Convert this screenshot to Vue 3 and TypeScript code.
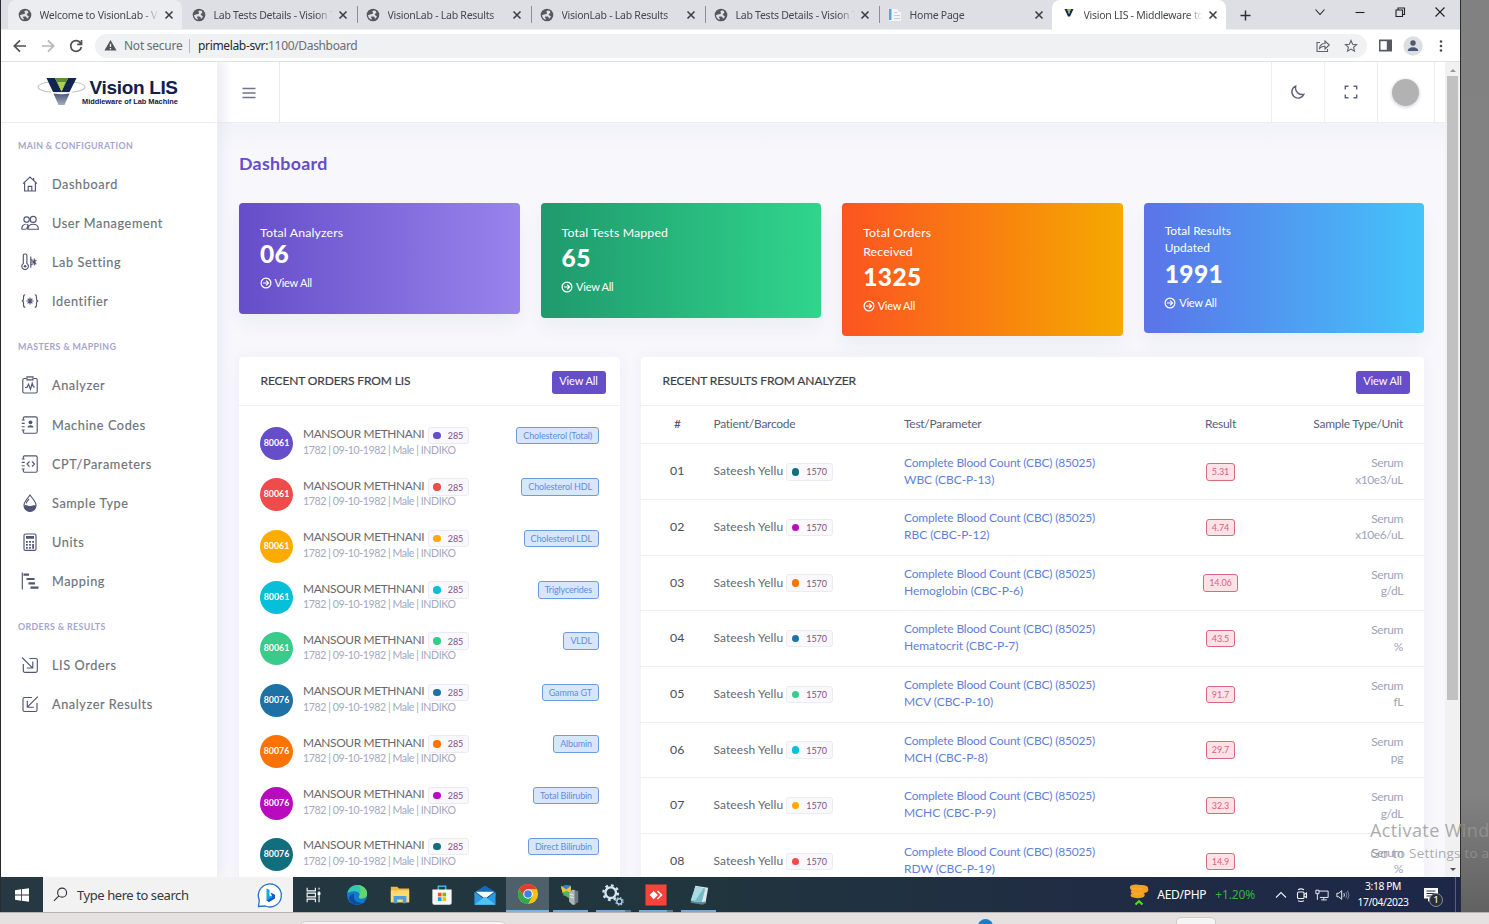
<script setup lang="ts">
interface Tab { title: string; icon: 'globe' | 'page' | 'vision'; state?: string }
interface NavItem { label: string; icon: string }
interface NavGroup { title: string; items: NavItem[] }

const tabs: Tab[] = [
  { title: 'Welcome to VisionLab - V', icon: 'globe', state: 'hover' },
  { title: 'Lab Tests Details - Vision T', icon: 'globe' },
  { title: 'VisionLab - Lab Results', icon: 'globe' },
  { title: 'VisionLab - Lab Results', icon: 'globe' },
  { title: 'Lab Tests Details - Vision T', icon: 'globe' },
  { title: 'Home Page', icon: 'page', state: 'last' },
  { title: 'Vision LIS - Middleware to', icon: 'vision', state: 'active' },
]

const solid = 'fill="currentColor" stroke="none"'
const icons: Record<string, string> = {
  home: '<path d="M2 8.6 9 2l7 6.6M3.6 7.4V16h10.8V7.4M7.2 16v-4.6h3.6V16M12.6 3v2"/>',
  users: '<circle cx="5.6" cy="5.6" r="2.7"/><circle cx="12.2" cy="5.4" r="3"/><path d="M.7 15.2c0-3 1.7-5 4-5M.7 15.2h4.4M7 15.2c0-3.2 2-5 5.2-5s5.200 1.800 5.200 5zM5.600 10.200l1.500 1-1.500 4"/>',
  lab: `<path d="M2.300 10.500V2.300c0-1.800 3.600-1.800 3.600 0v8.200a3.300 3.300 0 1 1-3.600 0z"/><circle cx="4.100" cy="13.300" r="1.300" ${solid}/><path d="M9.800 3.500v11.200M9.800 6.200l2 1.200M9.800 12l2-1.200M9.800 9h4.700M13.300 5.500v2L11.800 9l1.500 1.500v2M15.300 6.800 13.500 9l1.800 2.300"/>`,
  identifier: '<path d="M4.200 2.700C2.500 2.700 2.500 3.500 2.500 5v2c0 1-.6 2-1.800 2 1.200 0 1.800 1 1.800 2v2c0 1.500 0 2.300 1.700 2.300M13.800 2.700c1.700 0 1.700.8 1.700 2.300v2c0 1 .6 2 1.800 2-1.200 0-1.800 1-1.800 2v2c0 1.500 0 2.300-1.700 2.300"/><path stroke-width="1.200" d="M9 5.400v7.200M5.400 9h7.200M6.600 6.600l4.800 4.800M11.400 6.600l-4.800 4.800"/>',
  analyzer: '<path d="M5.500 2.500H3.300c-1 0-1.500.5-1.500 1.500v11.500c0 1 .5 1.500 1.500 1.500h11.400c1 0 1.500-.5 1.500-1.500V4c0-1-.5-1.500-1.500-1.500h-2.200"/><path d="M6 .8h6v3H6zM4 11.500h2l1.500-3.300 2 5.300 1.700-6.300L12.500 11H14"/>',
  codes: `<path d="M2.300 4V2c0-.7.4-1.200 1.200-1.200h11.200c1 0 1.500.5 1.500 1.500v13.400c0 1-.5 1.500-1.500 1.500H3.500c-.8 0-1.200-.5-1.200-1.200v-1.500M.7 4h3M.7 7.300h3M.7 10.700h3M.7 14h3"/><circle cx="9.500" cy="6.300" r="1.900" ${solid}/><path d="M6.500 11.500c.4-3 5.600-3 6 0z" ${solid}/>`,
  params: '<path d="M2.300 4V2c0-.7.4-1.200 1.200-1.200h11.200c1 0 1.500.5 1.500 1.500v13.400c0 1-.5 1.500-1.500 1.500H3.500c-.8 0-1.200-.5-1.200-1.200v-1.500M.7 4h3M.7 7.300h3M.7 10.700h3M.7 14h3M8.500 6.500 6 9l2.500 2.500M11 6.500 13.500 9 11 11.500"/>',
  drop: `<path d="M9 1c2.500 3.700 6 6.500 6 10.300a6 6 0 0 1-12 0C3 7.500 6.500 4.700 9 1z"/><path d="M3 11.500c2.500-1.800 4 1 6.500.5s3.500-1 5.500-.5a6 6 0 0 1-12 0z" ${solid}/><path d="M8 5C6.500 6.500 5.600 8 5.400 9.300"/>`,
  calc: `<rect x="3" y="1" width="12" height="16.400" rx="1.500"/><path d="M5 3h8v2.800H5zM5 8h1.800v1.800H5zM8.100 8h1.800v1.800H8.100zM11.200 8H13v1.800h-1.800zM5 11h1.800v1.800H5zM8.100 11h1.800v1.800H8.100zM11.200 11H13v4.800h-1.800zM5 14h1.800v1.800H5zM8.100 14h1.800v1.800H8.100z" ${solid}/>`,
  mapping: '<path d="M1.300.5v17"/><path stroke-width="2.200" d="M2.500 2.700H8M5.500 7h8M7.500 11.300H14M9.500 15.600h8"/>',
  inbox: '<path d="M2.300 8v6.800c0 1 .5 1.500 1.500 1.500h11c1 0 1.500-.5 1.500-1.500V4c0-1-.5-1.500-1.500-1.500H8.500M1 1.500l10.500 10.300M5.800 12h6V5.500"/>',
  edit: '<path d="M11 2.500H3.500c-1 0-1.500.5-1.500 1.500v11c0 1 .5 1.500 1.500 1.500h11c1 0 1.500-.5 1.500-1.500V8M16.800 1.700 6.300 12.200M6.300 5.800v6.400h6.500"/>',
}

const nav: NavGroup[] = [
  { title: 'MAIN & CONFIGURATION', items: [
    { label: 'Dashboard', icon: 'home' },
    { label: 'User Management', icon: 'users' },
    { label: 'Lab Setting', icon: 'lab' },
    { label: 'Identifier', icon: 'identifier' },
  ] },
  { title: 'MASTERS & MAPPING', items: [
    { label: 'Analyzer', icon: 'analyzer' },
    { label: 'Machine Codes', icon: 'codes' },
    { label: 'CPT/Parameters', icon: 'params' },
    { label: 'Sample Type', icon: 'drop' },
    { label: 'Units', icon: 'calc' },
    { label: 'Mapping', icon: 'mapping' },
  ] },
  { title: 'ORDERS & RESULTS', items: [
    { label: 'LIS Orders', icon: 'inbox' },
    { label: 'Analyzer Results', icon: 'edit' },
  ] },
]

const stats = [
  { lines: ['Total Analyzers'], value: '06', cls: 'violet' },
  { lines: ['Total Tests Mapped'], value: '65', cls: 'green' },
  { lines: ['Total Orders', 'Received'], value: '1325', cls: 'orange' },
  { lines: ['Total Results', 'Updated'], value: '1991', cls: 'blue' },
]

const orders = [
  { code: '80061', test: 'Cholesterol (Total)', color: '#664dc9' },
  { code: '80061', test: 'Cholesterol HDL', color: '#ef4b4b' },
  { code: '80061', test: 'Cholesterol LDL', color: '#ffab00' },
  { code: '80061', test: 'Triglycerides', color: '#06c0d9' },
  { code: '80061', test: 'VLDL', color: '#38cb89' },
  { code: '80076', test: 'Gamma GT', color: '#1d71a5' },
  { code: '80076', test: 'Albumin', color: '#fc7303' },
  { code: '80076', test: 'Total Bilirubin', color: '#b90abf' },
  { code: '80076', test: 'Direct Bilirubin', color: '#116e7c' },
]

const results = [
  { test: 'WBC (CBC-P-13)', value: '5.31', unit: 'x10e3/uL', color: '#116e7c' },
  { test: 'RBC (CBC-P-12)', value: '4.74', unit: 'x10e6/uL', color: '#b90abf' },
  { test: 'Hemoglobin (CBC-P-6)', value: '14.06', unit: 'g/dL', color: '#fc7303' },
  { test: 'Hematocrit (CBC-P-7)', value: '43.5', unit: '%', color: '#1d71a5' },
  { test: 'MCV (CBC-P-10)', value: '91.7', unit: 'fL', color: '#38cb89' },
  { test: 'MCH (CBC-P-8)', value: '29.7', unit: 'pg', color: '#06c0d9' },
  { test: 'MCHC (CBC-P-9)', value: '32.3', unit: 'g/dL', color: '#ffab00' },
  { test: 'RDW (CBC-P-19)', value: '14.9', unit: '%', color: '#ef4b4b' },
]

const apps: { name: string; art: string; state?: string }[] = [
  { name: 'tasks', art: '<g fill="none" stroke="#fff" stroke-width="1.200"><path d="M4.500 4v3.500h9V4M4.500 20v-3.500h9V20M4.500 10h9v4h-9zM17.500 4v2M17.500 8v12"/></g><path fill="#fff" d="M16 9h3v3h-3z"/>' },
  { name: 'edge', art: '<circle cx="12" cy="12" r="11" fill="#1279cf"/><path d="M1.500 10C3 3 9 .500 14 1.200c5 1 9.500 5 9 10.500-.4 3-4 4.300-7 4-2-.2-2.500-1-1.600-2.200C16 11 13.500 7.800 9.500 7.800 6 7.800 3.500 9 1.500 10z" fill="#35c8b0"/><path d="M14 1.200c5 1 9.500 5 9 10.500-.4 3-4 4.300-7 4-2-.2-2.500-1-1.600-2.200C16 11 17 5 14 1.200z" fill="#63d66b"/><path d="M9 11c-2 5 2 10.500 9 9.500-4 3.500-13 2.500-14.500-4C3 13 5.500 10.500 9 11z" fill="#0d4da1"/>' },
  { name: 'files', art: '<path fill="#f4b63c" d="M2 3h7l2 2h11v15H2z"/><path fill="#ffd971" d="M2 7h20v13H2z"/><path fill="#4a9ee0" d="M5 13h14v8h-4v-4H9v4H5z"/>' },
  { name: 'store', art: '<path fill="none" stroke="#3bb3ea" stroke-width="1.800" d="M8 7V2.500h8V7"/><path fill="#f7f7f7" d="M1.500 6h21v14.500q0 2-2 2h-17q-2 0-2-2z"/><path fill="#f25022" d="M7.500 9.500h4v4h-4z"/><path fill="#7fba00" d="M12.500 9.500h4v4h-4z"/><path fill="#00a4ef" d="M7.500 14.500h4v4h-4z"/><path fill="#ffb900" d="M12.500 14.500h4v4h-4z"/>' },
  { name: 'mail', art: '<path fill="#1668b8" d="M.5 9 12 1.500 23.500 9v4H.5z"/><path fill="#2a9be3" d="M.5 9v13.500h23V9L12 17z"/><path fill="#f4fafd" d="M2 8.500h20L12 16z"/><path fill="#4fc3f3" d="m.5 22.500 11.500-9 11.500 9z"/>' },
  { name: 'chrome', state: 'current', art: '<circle cx="12" cy="12" r="11" fill="#fbc116"/><path fill="#e33b2e" d="M2.500 6.500A11 11 0 0 1 21.500 6.500H12L7.400 14.600z"/><path fill="#2da94f" d="M2.500 6.500A11 11 0 0 0 12 23l4.600-8.400H7.400z"/><circle cx="12" cy="12" r="5.200" fill="#fff"/><circle cx="12" cy="12" r="4.100" fill="#3f7fe8"/>' },
  { name: 'server', state: 'open', art: '<path fill="#3683d2" d="M2 3q5-3 11-1v10l-8 1z"/><path fill="#f2c230" d="m2 2 6 4 5-4v8l-5-2-4 2z"/><path fill="#5bb44b" d="m4 9 6-1 2 8-5-3z"/><path fill="#aeb6ba" d="m11 9 4-3 3 1v15l-3 1-4-4z"/><path fill="#6a7880" d="m17 8 4-1v13l-4 2z"/><path stroke="#eef2f3" d="m12 11 4 1m-4 2 4 1"/>' },
  { name: 'services', state: 'open stacked', art: '<circle cx="9.500" cy="9.500" r="5.800" fill="none" stroke="#d6e6ee" stroke-width="2.600"/><circle cx="9.500" cy="9.500" r="8" fill="none" stroke="#d6e6ee" stroke-width="2.500" stroke-dasharray="3 3.280"/><circle cx="19" cy="19" r="2.800" fill="none" stroke="#a9cadb" stroke-width="1.600"/><circle cx="19" cy="19" r="4" fill="none" stroke="#a9cadb" stroke-width="1.500" stroke-dasharray="1.600 1.550"/>' },
  { name: 'anydesk', state: 'open stacked', art: '<path fill="#f9423a" d="M.5.5h23v23H.5z"/><path fill="#fff" d="m9.500 7.500 4.500 4.500-4.500 4.500L5 12zM13 8.200l1.200-1.200 5 5-5 5-1.200-1.200 3.800-3.800z"/>' },
  { name: 'notes', state: 'open', art: '<path fill="#dfe9ea" d="m8 2 14 2-3 17-15-2z"/><path fill="#77b9c6" d="m8 3 11 2-4 15-12-2z"/><path fill="#a8dce2" d="m8 3 9 1.700L8 18H3z"/><path fill="#5a8793" d="M3 18.500 15 20l4-1v2l-3 1.500L3 20.500z"/>' },
]
</script>

<template>
  <div class="screen">
    <div class="window">
      <div class="tabstrip">
        <div v-for="(t, i) in tabs" :key="i" class="tab" :class="t.state">
          <svg v-if="t.icon === 'globe'" class="fav" viewBox="0 0 14 14"><circle cx="7" cy="7" r="6.300" fill="#55595e" /><path fill="#dfe1e5" d="M8 2.500c-1.500.3-2 1-1.200 2C7.800 5.500 6 6.300 5 6.200 3.800 6.100 2.800 7 2 7c.2 2.500 1.500 4 3.500 4.700.6-1.200 0-1.700-.7-2.500C4.400 8.500 6.500 8.200 7.500 8.500c1.300.5 1.500 1.300 1.400 2.500L10.800 9c.2-1-.5-1.500-1.800-1.800C8.500 6 9 5.500 10.300 5L10 3.300C9.500 2.800 8.700 2.400 8 2.500z" /></svg>
          <svg v-else-if="t.icon === 'page'" class="fav" viewBox="0 0 14 14"><path fill="#f4f4f4" d="M1 1h8l2 3h2v9H1z" /><path fill="#58a6d6" d="M1 1h2.500v11H1z" /><path stroke="#c8ccd0" d="M6 4.500h3M6 7.500h6M6 10.500h6" /></svg>
          <svg v-else class="fav" viewBox="0 0 14 14"><path fill="#17294f" d="M2.500 1h2.700L7 6l1.800-5h2.700L8 8.500H6z" /><path fill="#8cba62" d="M5 1h4L7 6z" /></svg>
          <span class="tab-title">{{ t.title }}</span>
          <svg class="close" viewBox="0 0 10 10"><path d="m1.500 1.500 7 7m0-7-7 7" /></svg>
        </div>
        <svg class="plus" viewBox="0 0 12 12"><path d="M6 .5v11M.5 6h11" /></svg>
        <div class="win-controls">
          <svg viewBox="0 0 12 12"><path d="m1.500 3.500 4.500 5 4.500-5" /></svg>
          <svg viewBox="0 0 12 12"><path d="M1.500 6.500h9" /></svg>
          <svg viewBox="0 0 12 12"><path d="M2 4h6.500v6.500H2zM4 4V2h6.500v6.500h-2" /></svg>
          <svg viewBox="0 0 12 12"><path d="m1.500 1.500 9 9m0-9-9 9" /></svg>
        </div>
      </div>

      <div class="toolbar">
        <svg class="nav-btn" viewBox="0 0 14 14"><path d="M13 7H1.500M7 1.300 1.300 7 7 12.700" /></svg>
        <svg class="nav-btn faded" viewBox="0 0 14 14"><path d="M1 7h11.500M7 1.300 12.700 7 7 12.700" /></svg>
        <svg class="nav-btn" viewBox="0 0 14 14"><path d="M11.800 4.300a5.400 5.400 0 1 0 .6 3.700M12.500 1v4.300H8.200" /></svg>
        <div class="omnibox">
          <svg class="warn" viewBox="0 0 14 14"><path fill="#505459" d="M7 1 13.500 12.500H.5z" /><path stroke="#f0f1f3" stroke-width="1.400" d="M7 5v3.700M7 9.700v1.500" /></svg>
          <span class="not-secure">Not secure</span>
          <span class="url"><b>primelab-svr:</b>1100/Dashboard</span>
          <svg class="share" viewBox="0 0 14 14"><path d="M4 3.500H1v9h10.500V10M3.500 9.500c.3-3.500 2.500-5 5.500-5V2l4.300 4L9 10V7.300c-2.500 0-4 .5-5.500 2.200z" /></svg>
          <svg class="star" viewBox="0 0 14 14"><path d="m7 1.500 1.600 3.700 4 .4-3 2.700.9 3.900L7 10.100l-3.500 2.100.9-3.900-3-2.700 4-.4z" /></svg>
        </div>
        <svg class="panel-btn" viewBox="0 0 13 13"><path fill="#55595f" d="M0 .5h13v12H0z" /><path fill="#fff" d="M1.500 2.200h6.300v8.600H1.500z" /></svg>
        <svg class="profile" viewBox="0 0 20 20"><circle cx="10" cy="10" r="9.700" fill="#dcdee4" /><circle cx="10" cy="7" r="2.700" fill="#4c5871" /><path fill="#4c5871" d="M4.800 15c0-5 10.400-5 10.400 0z" /></svg>
        <svg class="dots" viewBox="0 0 4 14"><circle cx="2" cy="2.500" r="1.300" /><circle cx="2" cy="7" r="1.300" /><circle cx="2" cy="11.500" r="1.300" /></svg>
      </div>

      <div class="page">
        <aside class="sidebar">
          <div class="brand">
            <svg class="mark" viewBox="0 0 49 30">
              <defs><linearGradient id="vtip" x1="0" y1="0" x2="0" y2="1"><stop offset="0" stop-color="#4c5879" /><stop offset="1" stop-color="#a7aec0" /></linearGradient></defs>
              <ellipse cx="24.500" cy="12" rx="23.500" ry="6" fill="none" stroke="#c3c4c8" stroke-width="1.200" />
              <path fill="#122450" d="M9.500 3H18l6.500 13.500L31 3h8.500l-7 14H16z" />
              <path fill="#5f8f35" d="M18 3h13l-6.500 13.500z" /><path fill="#b0cf4b" d="m20.500 7h8l-4 9.500z" />
              <path fill="#fff" d="M14 16.500q10.500 2.500 21 0v1.300q-10.500 2.500-21 0z" />
              <path fill="url(#vtip)" d="M16.500 18.600q8 1.200 16 0L27.500 30h-6z" />
            </svg>
            <div class="brand-text"><span class="brand-name">Vision LIS</span><span class="brand-sub">Middleware of Lab Machine</span></div>
          </div>
          <nav>
            <section v-for="g in nav" :key="g.title" class="group">
              <h6>{{ g.title }}</h6>
              <a v-for="n in g.items" :key="n.label" class="nav-item">
                <svg viewBox="0 0 18 18" v-html="icons[n.icon]"></svg><span>{{ n.label }}</span>
              </a>
            </section>
          </nav>
        </aside>

        <div class="main">
          <header class="topbar">
            <div class="burger"><svg viewBox="0 0 14 12"><path d="M.5 1.500h13M.5 6h13M.5 10.500h13" /></svg></div>
            <div class="spacer"></div>
            <div class="top-cell"><svg viewBox="0 0 16 16"><path d="M5.700 2.200a6.200 6.200 0 1 0 8.100 8.100C9.700 11.500 4.500 8 5.700 2.200z" /></svg></div>
            <div class="top-cell"><svg viewBox="0 0 16 16"><path d="M2.300 5.500V2.300h3.200M10.500 2.300h3.200v3.200M13.700 10.500v3.200h-3.200M5.500 13.700H2.300v-3.200" /></svg></div>
            <div class="top-cell user"><span class="avatar"></span></div>
          </header>

          <div class="content">
            <h1>Dashboard</h1>
            <div class="stats">
              <div v-for="s in stats" :key="s.cls" class="stat" :class="s.cls">
                <div v-for="l in s.lines" :key="l" class="stat-label">{{ l }}</div>
                <div class="stat-value">{{ s.value }}</div>
                <div class="stat-link"><svg viewBox="0 0 12 12"><circle cx="6" cy="6" r="4.900" /><path d="M3 6h5.500M6.200 3.700 8.500 6 6.200 8.300" /></svg>View All</div>
              </div>
            </div>

            <div class="panels">
              <section class="panel orders">
                <div class="panel-head"><h2>RECENT ORDERS FROM LIS</h2><button>View All</button></div>
                <div class="order-list">
                  <div v-for="o in orders" :key="o.test" class="order">
                    <span class="code" :style="{ background: o.color }">{{ o.code }}</span>
                    <div class="order-info">
                      <div class="order-top"><span class="name">MANSOUR METHNANI</span><span class="chip"><i :style="{ background: o.color }"></i>285</span></div>
                      <div class="order-sub">1782 | 09-10-1982 | Male | INDIKO</div>
                    </div>
                    <span class="tag">{{ o.test }}</span>
                  </div>
                </div>
              </section>

              <section class="panel results">
                <div class="panel-head"><h2>RECENT RESULTS FROM ANALYZER</h2><button>View All</button></div>
                <div class="row thead"><span class="num">#</span><span>Patient/Barcode</span><span>Test/Parameter</span><span class="mid">Result</span><span class="end">Sample Type/Unit</span></div>
                <div v-for="(r, i) in results" :key="r.test" class="row">
                  <span class="num">0{{ i + 1 }}</span>
                  <span class="patient">Sateesh Yellu<span class="chip"><i :style="{ background: r.color }"></i>1570</span></span>
                  <span class="test"><span class="panel-name">Complete Blood Count (CBC) (85025)</span><span>{{ r.test }}</span></span>
                  <span class="mid"><span class="value">{{ r.value }}</span></span>
                  <span class="end unit"><span>Serum</span><span>{{ r.unit }}</span></span>
                </div>
              </section>
            </div>
          </div>
        </div>

        <div class="scrollbar"><i class="up"></i><div class="thumb"></div><i class="down"></i></div>
      </div>

      <div class="taskbar">
        <div class="start"><svg viewBox="0 0 16 16"><path fill="#fff" d="M1 3.200 7 2.300v5.300H1zM7.800 2.200 15 1.200v6.400H7.800zM1 8.400h6v5.300l-6-.9zM7.800 8.400H15v6.400l-7.200-1z" /></svg></div>
        <div class="search">
          <svg class="lens" viewBox="0 0 16 16"><circle cx="9.700" cy="6" r="4.800" /><path d="M6.300 9.400 1 14.800" /></svg>
          <span>Type here to search</span>
          <svg class="bing" viewBox="0 0 26 26"><path fill="#fff" stroke="#246fd1" stroke-width="1.300" d="M1.500 24.500l.8-6.500a11.500 11.500 0 1 1 6 6z" /><path fill="#19a6e8" d="m9.500 6.500 3 1.200V14l5.500-.5v3L12 20l-2.500-1.700z" /><path fill="#1757c8" d="m13.500 10.500 4.500 2.300v3.500L12 20l-2.500-1.700 6-3.300z" /></svg>
        </div>
        <div v-for="a in apps" :key="a.name" class="app" :class="a.state"><svg viewBox="0 0 24 24" v-html="a.art"></svg></div>
        <div class="spacer"></div>
        <svg class="coins" viewBox="0 0 20 22"><path fill="#f6a020" d="M2 1.500Q6 0 11 1q7-.5 8 2.500 1.500 5-4 5.500 2 3-1.500 4.500-6 1.500-11-.5-2-2 .5-4Q.5 8.500 2.500 6.500-.5 3 2 1.500z" /><path fill="none" stroke="#ffb23c" d="M3 4.500q6 1.500 10 0M5 9.500q5 1 8-.5" /><path fill="none" stroke="#5fd31c" stroke-width="2.200" d="m6.500 20.500 3.500-3.300 3.500 3.300" /></svg>
        <span class="pair">AED/PHP</span><span class="gain">+1.20%</span>
        <svg class="tray" viewBox="0 0 14 14"><path d="m2 9.500 5-5 5 5" /></svg>
        <svg class="tray" viewBox="0 0 14 14"><rect x="2.500" y="4" width="6.500" height="6.500" rx="1" /><path d="m9 6.500 2.500-1.500v4.500L9 8M3 1.700Q6 0 9 1.700M3 12.700q3 1.500 6 0" /></svg>
        <svg class="tray" viewBox="0 0 16 14"><path d="M4.500 2.500H15v7.300H5.500M10 10v2.500M7 12.600h6.500M1 1.500h3.500v4H1zM2.700 5.500v7" /></svg>
        <svg class="tray" viewBox="0 0 16 14"><path d="M1 5h2.200L6.500 2v10L3.200 9H1zM9 5q1.200 2 0 4" /><path class="dim" d="M11.200 3.500q2.400 3.500 0 7M13.200 2q3.400 5 0 10" /></svg>
        <div class="clock"><span>3:18 PM</span><span>17/04/2023</span></div>
        <div class="notif"><svg viewBox="0 0 16 16"><path fill="#fff" d="M1 1h14v10.500H8L5 15v-3.500H1z" /><path stroke="#25304d" d="M3.500 4h9M3.500 6.500h9M3.500 9h6" /></svg><b>1</b></div>
        <div class="peek"></div>
      </div>
    </div>

    <div class="bezel"><span class="ghost one"></span><span class="ghost two"></span><span class="ghost dot"></span></div>
    <div class="activate"><span>Activate Windows</span><small>Go to Settings to activate</small></div>
  </div>
</template>

<style>
body { margin: 0; overflow: hidden; }
</style>

<style scoped>
* { box-sizing: border-box; }
.screen { position: relative; width: 1489px; height: 924px; overflow: hidden; background: linear-gradient(#818181 0, #828282 86%, #606060 99%); font-family: "Lato", "Open Sans", sans-serif; white-space: nowrap; }
svg { display: block; flex: none; fill: none; overflow: visible; }
.spacer { flex: 1; }
.window { width: 1461px; height: 912px; border-left: 1px solid #2a2b2d; border-right: 1px solid #2b2c2e; display: flex; flex-direction: column; background: #fff; }

/* browser chrome */
.tabstrip { height: 30px; flex: none; display: flex; padding-left: 7px; background: #dddfe4; font-family: "Noto Sans", "Open Sans", sans-serif; border-bottom: 1px solid #eceef0; }
.tab { width: 174px; height: 29px; display: flex; align-items: center; padding: 0 8px 0 10px; position: relative; color: #45484c; }
.tab:not(.hover):not(.active):not(.last)::after { content: ""; width: 1px; height: 17px; background: #8c8f95; position: absolute; right: -2px; top: 6px; }
.tab.hover { background: #ebedf0; border-radius: 8px 8px 0 0; }
.tab.active { background: #fff; border-radius: 8px 8px 0 0; height: 30px; }
.fav { width: 14px; height: 14px; margin-right: 7px; }
.tab-title { flex: 1; overflow: hidden; font-size: 10.500px; letter-spacing: -.25px; position: relative; left: .5px; -webkit-mask-image: linear-gradient(90deg, #000 86%, transparent); mask-image: linear-gradient(90deg, #000 86%, transparent); }
.close { width: 10px; height: 10px; margin-left: 6px; stroke: #3c4043; stroke-width: 1.600; }
.plus { width: 11px; height: 11px; margin: 10px 0 0 14px; stroke: #2d3033; stroke-width: 1.600; }
.win-controls { margin-left: auto; display: flex; gap: 28px; padding: 6px 14px 0 0; }
.win-controls svg { width: 12px; height: 12px; stroke: #222; stroke-width: 1.100; }
.toolbar { height: 32px; flex: none; display: flex; align-items: center; border-bottom: 1px solid #dfe1e5; padding-left: 12px; font-family: "Noto Sans", sans-serif; }
.nav-btn { width: 14px; height: 14px; stroke: #4d5156; stroke-width: 1.700; margin-right: 14px; }
.nav-btn.faded { stroke: #b4b7bb; }
.omnibox { width: 1272px; height: 24px; border-radius: 12px; background: #f0f1f3; display: flex; align-items: center; margin-left: -2px; padding: 0 9px 0 9px; font-size: 12px; color: #6a6d72; }
.warn { width: 13px; height: 13px; }
.not-secure { margin-left: 7px; width: 66px; border-right: 1px solid #b6b9bd; line-height: 14px; letter-spacing: -.25px; }
.url { margin-left: 8px; flex: 1; letter-spacing: -.34px; }
.url b { font-weight: 400; color: #26282b; }
.share, .star { width: 14px; height: 14px; stroke: #5f6368; stroke-width: 1.100; margin-left: 14px; }
.panel-btn { width: 13px; height: 13px; margin-left: 12px; }
.profile { width: 20px; height: 20px; margin-left: 11px; }
.dots { width: 4px; height: 14px; margin-left: 16px; fill: #484b50; }

/* page shell */
.page { flex: 1; min-height: 0; display: flex; background: #f7f7fc; overflow: hidden; }
.sidebar { width: 217px; background: #fff; flex: none; border-right: 1px solid #eef0f5; box-shadow: 2px 0 14px rgba(50, 50, 110, .08); z-index: 1; }
.brand { height: 61px; border-bottom: 1px solid #ececf2; display: flex; padding: 13px 0 0 36px; }
.mark { width: 49px; height: 30px; }
.brand-text { display: flex; flex-direction: column; font-family: "Liberation Sans", Arial, sans-serif; font-weight: 700; color: #10204a; }
.brand-name { font-size: 19px; line-height: 21px; padding: 2px 0 0 3.500px; letter-spacing: -.33px; }
.brand-sub { font-size: 7.400px; line-height: 8px; margin-left: -4px; letter-spacing: -.01px; }
.group h6 { margin: 0; padding-left: 17px; height: 41.500px; line-height: 45px; font-size: 8.800px; font-weight: 700; letter-spacing: .38px; color: #a7a4cf; }
.group + .group { margin-top: 3.500px; }
.nav-item { height: 39.100px; display: flex; align-items: center; padding-left: 20px; font-size: 12.700px; letter-spacing: .6px; color: #6b7379; -webkit-text-stroke: .15px #6b7379; }
.nav-item svg { width: 18px; height: 18px; margin-right: 13px; stroke: #505674; color: #505674; stroke-width: 1.150; }
.main { width: 1227px; flex: none; display: flex; flex-direction: column; }
.topbar { height: 61px; flex: none; background: #fff; border-bottom: 1px solid #eaecf2; display: flex; padding-right: 10px; }
.burger { width: 62px; border-right: 1px solid #ebebf2; display: flex; align-items: center; justify-content: center; padding-top: 1px; background: linear-gradient(90deg, #f7f7fa, #fff 14px); }
.burger svg { width: 14px; height: 12px; stroke: #70738c; stroke-width: 1.600; }
.top-cell { width: 53px; border-left: 1px solid #ebeef3; display: flex; align-items: center; justify-content: center; }
.top-cell svg { width: 16px; height: 16px; stroke: #5b607c; stroke-width: 1.400; }
.top-cell.user { width: 58px; border-right: 1px solid #ebeef3; }
.avatar { width: 27px; height: 27px; border-radius: 50%; background: #b2b2b2; box-shadow: 0 1px 3px 1px #dedee6; margin-right: 1px; }
.content { padding: 0 21px; background: linear-gradient(#f2f3f9, #f7f7fc 28px); flex: 1; }
h1 { margin: 0; height: 80px; line-height: 81px; font-size: 17.800px; color: #664dc9; letter-spacing: .3px; }
.stats { display: grid; grid-template-columns: repeat(4, 280.700px); gap: 20.900px; height: 154px; align-items: start; }
.stat { --vh: 32px; --gap: 5px; border-radius: 4px; padding: 21px 21px 22px; color: #fff; box-shadow: 0 10px 18px rgba(60, 70, 120, .05); }
.stat-label { font-size: 12.300px; line-height: 18.500px; letter-spacing: .15px; }
.stat-value { font-size: 24.500px; font-weight: 900; height: var(--vh); line-height: var(--vh); letter-spacing: .4px; position: relative; top: -.5px; }
.stat-link { margin-top: var(--gap); height: 16px; line-height: 16px; font-size: 11px; display: flex; align-items: center; gap: 3px; letter-spacing: -.25px; position: relative; top: -.5px; }
.stat-link svg { width: 12px; height: 12px; stroke: #fff; stroke-width: 1.200; margin-left: -.500px; }
.violet { --vh: 24px; --gap: 9px; background: linear-gradient(90deg, #664dc9, #9884ec); }
.green { --vh: 31px; --gap: 6px; background: linear-gradient(90deg, #1f996d, #30d58c); }
.orange { background: linear-gradient(90deg, #fc5421, #f5a900); }
.blue { --vh: 35px; --gap: 4px; padding-top: 19px; background: linear-gradient(90deg, #5b73e8, #44c4fa); }
.blue .stat-label { font-size: 11.900px; line-height: 17px; letter-spacing: .05px; }

/* panels */
.panels { display: flex; gap: 21px; align-items: flex-start; }
.panel { background: #fff; border-radius: 4px; box-shadow: 0 0 14px rgba(60, 70, 120, .05); height: 620px; flex: none; }
.orders { width: 381px; }
.results { width: 783px; }
.panel-head { height: 49.300px; border-bottom: 1px solid #ecf0f2; display: flex; justify-content: space-between; padding: 14px 14.500px 0 21.500px; }
h2 { margin: 0; font-size: 12px; font-weight: 400; line-height: 19px; color: #3b3f45; letter-spacing: -.12px; -webkit-text-stroke: .2px #3b3f45; }
button { width: 54px; height: 22.500px; border: 0; border-radius: 3px; background: #664dc9; color: #fff; font: 11px "Lato", sans-serif; line-height: 20px; padding: 0 0 2px; letter-spacing: -.1px; }
.order-list { padding: 20.700px 21px; }
.order { height: 51.370px; display: flex; align-items: flex-start; }
.code { width: 33px; height: 33px; border-radius: 50%; color: #fff; font-size: 8.800px; font-weight: 700; line-height: 31px; text-align: center; flex: none; }
.order-info { margin-left: 10px; flex: 1; margin-top: -.500px; }
.order-top { display: flex; height: 16.500px; align-items: flex-start; }
.name { font-size: 11.900px; line-height: 15px; color: #65696b; letter-spacing: -.36px; }
.chip { display: inline-flex; align-items: center; height: 17.500px; border: 1px solid #ecebf3; border-radius: 3px; background: #f9f9fd; font-size: 9px; color: #834f86; padding: 0 4.500px; margin-left: 4px; letter-spacing: 0; }
.order-top .chip { margin-top: .500px; margin-left: 3.500px; }
.chip i { width: 7.500px; height: 7.500px; border-radius: 50%; margin-right: 7px; }
.order-sub { font-size: 10.600px; line-height: 14px; color: #a2a8be; letter-spacing: -.41px; }
.tag { border: 1px solid #6c9bdf; border-radius: 3px; background: #d8e6f9; color: #5c8de6; font-size: 9px; height: 17.500px; line-height: 15px; padding: 0 6px; letter-spacing: -.14px; }
.row { display: grid; grid-template-columns: 72.500px 190.500px 280px 73px 1fr; height: 55.650px; border-bottom: 1px solid #eceff1; padding-right: 21px; align-items: center; color: #66696b; font-size: 12px; }
.row.thead { height: 38.200px; color: #59627d; padding-bottom: 3px; letter-spacing: -.28px; }
.num { text-align: center; color: #4a4d54; }
.row:not(.thead) .num { position: relative; top: -1px; font-size: 12.300px; }
.patient { position: relative; top: -1px; display: flex; align-items: center; letter-spacing: .08px; }
.patient .chip { position: relative; top: 1px; margin-left: 3px; }
.test { display: flex; flex-direction: column; line-height: 17px; color: #5f7fdb; padding-bottom: 2.500px; letter-spacing: -.04px; }
.panel-name { letter-spacing: -.19px; }
.mid { text-align: center; }
.value { display: inline-block; border: 1px solid #d66c77; background: #fde3e8; color: #df6077; border-radius: 3px; font-size: 9px; line-height: 15px; height: 17.500px; padding: 0 5px; letter-spacing: -.1px; }
.end { text-align: right; }
.unit { display: flex; flex-direction: column; line-height: 16.500px; color: #9da3bb; letter-spacing: -.4px; }
.scrollbar { width: 15px; flex: none; background: #f1f1f2; display: flex; flex-direction: column; align-items: center; padding: 6px 0 5px; justify-content: space-between; }
.scrollbar i { border: 3px solid transparent; }
.scrollbar .up { border-bottom-color: #969696; margin-top: -2px; }
.scrollbar .down { border-top-color: #505050; margin-bottom: -2px; }
.thumb { width: 11px; height: 624px; flex: none; background: #c1c1c2; margin-bottom: auto; margin-top: 4px; }

/* taskbar */
.taskbar { height: 35px; flex: none; display: flex; background: linear-gradient(90deg, #263943, #20353e 48%, #202d43 72%, #1d2749); color: #fff; font-family: "Noto Sans", sans-serif; }
.start { width: 42px; display: flex; align-items: center; justify-content: center; }
.start svg { width: 16px; height: 16px; }
.search { width: 250px; background: #f2f2f2; display: flex; align-items: center; padding: 0 10px 0 10px; font-size: 13px; color: #35373a; letter-spacing: -.43px; }
.lens { width: 15px; height: 15px; stroke: #333; stroke-width: 1.200; margin-right: 9px; }
.bing { width: 26px; height: 26px; margin-left: auto; }
.app { width: 42.700px; display: flex; align-items: center; justify-content: center; position: relative; }
.app svg { width: 22px; height: 22px; }
.app.current { background: #4e6069; border-bottom: 2px solid #76b5e6; }
.app.open::after { content: ""; position: absolute; left: 4px; right: 4px; bottom: 0; height: 2px; background: #70acd9; }
.app.stacked::after { border-right: 6px solid #4d7d9f; }
.coins { width: 20px; height: 22px; margin: 7px 8px 0 0; }
.pair, .gain { font-size: 12px; line-height: 35px; letter-spacing: -.3px; }
.gain { color: #34b53a; margin: 0 19px 0 9px; letter-spacing: -.15px; }
.tray { width: 14px; height: 14px; margin: 11px 6.500px 0 0; stroke: #eef0f4; stroke-width: 1.100; }
.dim { stroke: #7c8499; }
.clock { width: 54px; display: flex; flex-direction: column; text-align: center; font-size: 10.300px; line-height: 16px; padding-top: 1px; letter-spacing: -.4px; }
.notif { position: relative; width: 26px; margin-left: 13px; padding-top: 10px; }
.notif svg { width: 16px; height: 16px; }
.notif b { position: absolute; left: 6px; top: 16px; width: 14px; height: 14px; border-radius: 50%; border: 1px solid #8a909b; background: #2b2e36; font-size: 9px; line-height: 12px; text-align: center; font-weight: 500; }
.peek { width: 5px; border-left: 1px solid #59617a; margin-left: 6px; }

.bezel { position: relative; height: 12px; background: #e4e1e0; border-top: 1px solid #b3b3b4; overflow: hidden; }
.ghost { position: absolute; background: #f6f5f5; border: 1px solid #cfcccc; border-radius: 8px; height: 20px; }
.one { left: 298px; width: 210px; top: 8px; }
.two { left: 1176px; width: 40px; top: 4px; border-radius: 5px; }
.dot { left: 978px; width: 15px; height: 15px; top: 6px; background: #1d7cc9; border: 0; }
.activate { position: absolute; left: 1370px; top: 818px; color: rgba(150, 150, 150, .8); font: 18px/24px "Open Sans", "Noto Sans", sans-serif; display: flex; flex-direction: column; letter-spacing: .4px; }
.activate small { font-size: 13.500px; line-height: 22px; letter-spacing: .2px; }
</style>
